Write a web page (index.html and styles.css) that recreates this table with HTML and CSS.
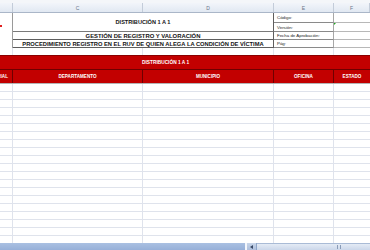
FILE: index.html
```html
<!DOCTYPE html>
<html lang="es">
<head>
<meta charset="utf-8">
<title>Distribución 1 a 1</title>
<link rel="stylesheet" href="styles.css">
</head>
<body>
<div class="sheet">
  <div class="topstrip"></div>
  <div class="grid colhead">
    <div class="ch"></div>
    <div class="ch">C</div>
    <div class="ch">D</div>
    <div class="ch">E</div>
    <div class="ch">F</div>
  </div>
  <div class="grid title">
    <div class="lc"><span class="redmark"></span></div>
    <div class="t t1">DISTRIBUCIÓN 1 A 1</div>
    <div class="e">Código:</div>
    <div class="f"></div>
    <div class="e">Versión:</div>
    <div class="f tricell"><span class="tri"></span></div>
    <div class="t t2">GESTIÓN DE REGISTRO Y VALORACIÓN</div>
    <div class="e">Fecha de Aprobación:</div>
    <div class="f"></div>
    <div class="t t3">PROCEDIMIENTO REGISTRO EN EL RUV DE QUIEN ALEGA LA CONDICIÓN DE VÍCTIMA</div>
    <div class="e">Pág:</div>
    <div class="f"></div>
  </div>
  <div class="grid blank">
    <div class="c"></div><div class="c"></div><div class="c"></div><div class="c"></div><div class="c"></div>
  </div>
  <div class="redtop"><span>DISTRIBUCIÓN 1 A 1</span></div>
  <div class="grid redcols">
    <div class="rc rc-first"><span>TERRITORIAL</span></div>
    <div class="rc">DEPARTAMENTO</div>
    <div class="rc">MUNICIPIO</div>
    <div class="rc">OFICINA</div>
    <div class="rc">ESTADO</div>
  </div>
  <div class="rows" id="rows"></div>
  <div class="bar">
    <div class="bar-fill"></div>
    <div class="bar-sep"></div>
    <div class="bar-arrow"><span class="arr"></span></div>
    <div class="track"><span class="grip"></span></div>
  </div>
</div>
<script>
  var rows = document.getElementById('rows');
  for (var i = 0; i < 20; i++) {
    var r = document.createElement('div');
    r.className = 'grid row';
    for (var j = 0; j < 5; j++) {
      var c = document.createElement('div');
      c.className = 'c';
      r.appendChild(c);
    }
    rows.appendChild(r);
  }
</script>
</body>
</html>
```

FILE: styles.css
```css
* { box-sizing: border-box; margin: 0; padding: 0; }
html, body { background: #ffffff; }
body { font-family: "Liberation Sans", Arial, sans-serif; color: #1a1a1a; }

.sheet { width: 370px; height: 250px; overflow: hidden; display: flex; flex-direction: column; }

.grid { display: grid; grid-template-columns: 13px 130px 131px 60px 1fr; }

.topstrip { height: 3px; background: #f4f6f9; }

.colhead { height: 10px; background: linear-gradient(#f2f5fa, #e1e8f2); border-bottom: 1px solid #aab6c8; }
.ch { border-right: 1px solid #c3ccd9; font-size: 5px; color: #6a7488; display: flex; align-items: center; justify-content: center; }

.title { grid-template-rows: 10px 9px 8px 8px; height: 35px; }
.lc { grid-row: 1 / span 4; grid-column: 1; border-right: 1px solid #9a9a9a; position: relative; }
.redmark { position: absolute; left: 0; top: 12px; width: 2px; height: 2px; background: #e02020; }
.t { grid-column: 2 / span 2; border-right: 1px solid #5e5e5e; border-bottom: 1px solid #5e5e5e; font-weight: bold; display: flex; align-items: center; justify-content: center; white-space: nowrap; color: #141414; }
.t1 { grid-row: 1 / span 2; font-size: 5.6px; border-bottom-color: #7a7a7a; }
.t2 { grid-row: 3; font-size: 5.9px; }
.t3 { grid-row: 4; font-size: 5.75px; }
.e { grid-column: 4; border-right: 1px solid #a8a8a8; border-bottom: 1px solid #8a8a8a; font-size: 4.4px; display: flex; align-items: center; padding-left: 3px; color: #1e1e1e; white-space: nowrap; }
.f { grid-column: 5; border-bottom: 1px solid #b8b8b8; }
.tricell { position: relative; }
.tri { position: absolute; left: 0; top: 0; width: 0; height: 0; border-top: 2px solid #1ea81e; border-right: 2px solid transparent; }

.blank { height: 7px; }
.c { border-right: 1px solid #dfe3ec; }
.c:last-child { border-right: none; }

.redtop { height: 15px; background: #c20000; border-top: 1px solid #8a0000; border-bottom: 1px solid #6e0000; display: flex; align-items: center; padding-left: 142px; }
.redtop span { color: #ffffff; font-weight: bold; font-size: 4.8px; white-space: nowrap; }

.redcols { height: 14px; background: #c20000; border-bottom: 1px solid #b4b4b4; }
.rc { border-right: 1px solid #6e0000; color: #ffffff; font-weight: bold; font-size: 4.6px; display: flex; align-items: center; justify-content: center; white-space: nowrap; overflow: hidden; }
.rc:last-child { border-right: none; }
.rc-first { justify-content: flex-end; padding-right: 4px; }

.rows { height: 159px; overflow: hidden; }
.row { height: 8px; border-bottom: 1px solid #dfe3ec; }

.bar { height: 7px; display: flex; background: #9db5dc; }
.bar-fill { width: 245px; background: linear-gradient(#a9c0e2, #97b0d8); }
.bar-sep { width: 2px; background: #f4f7fc; }
.bar-arrow { width: 10px; background: linear-gradient(#c8d6ea, #aebfdc); display: flex; align-items: center; justify-content: center; border-right: 1px solid #8fa6c8; }
.arr { width: 0; height: 0; border-top: 2px solid transparent; border-bottom: 2px solid transparent; border-right: 3px solid #3a4a66; }
.track { flex: 1; background: linear-gradient(#e4ebf5, #cbd7ea); border-top: 1px solid #a9bbd6; position: relative; }
.grip { position: absolute; left: 80px; top: 1px; width: 4px; height: 4px; border-left: 1px solid #8a9cb8; border-right: 1px solid #8a9cb8; }
```
